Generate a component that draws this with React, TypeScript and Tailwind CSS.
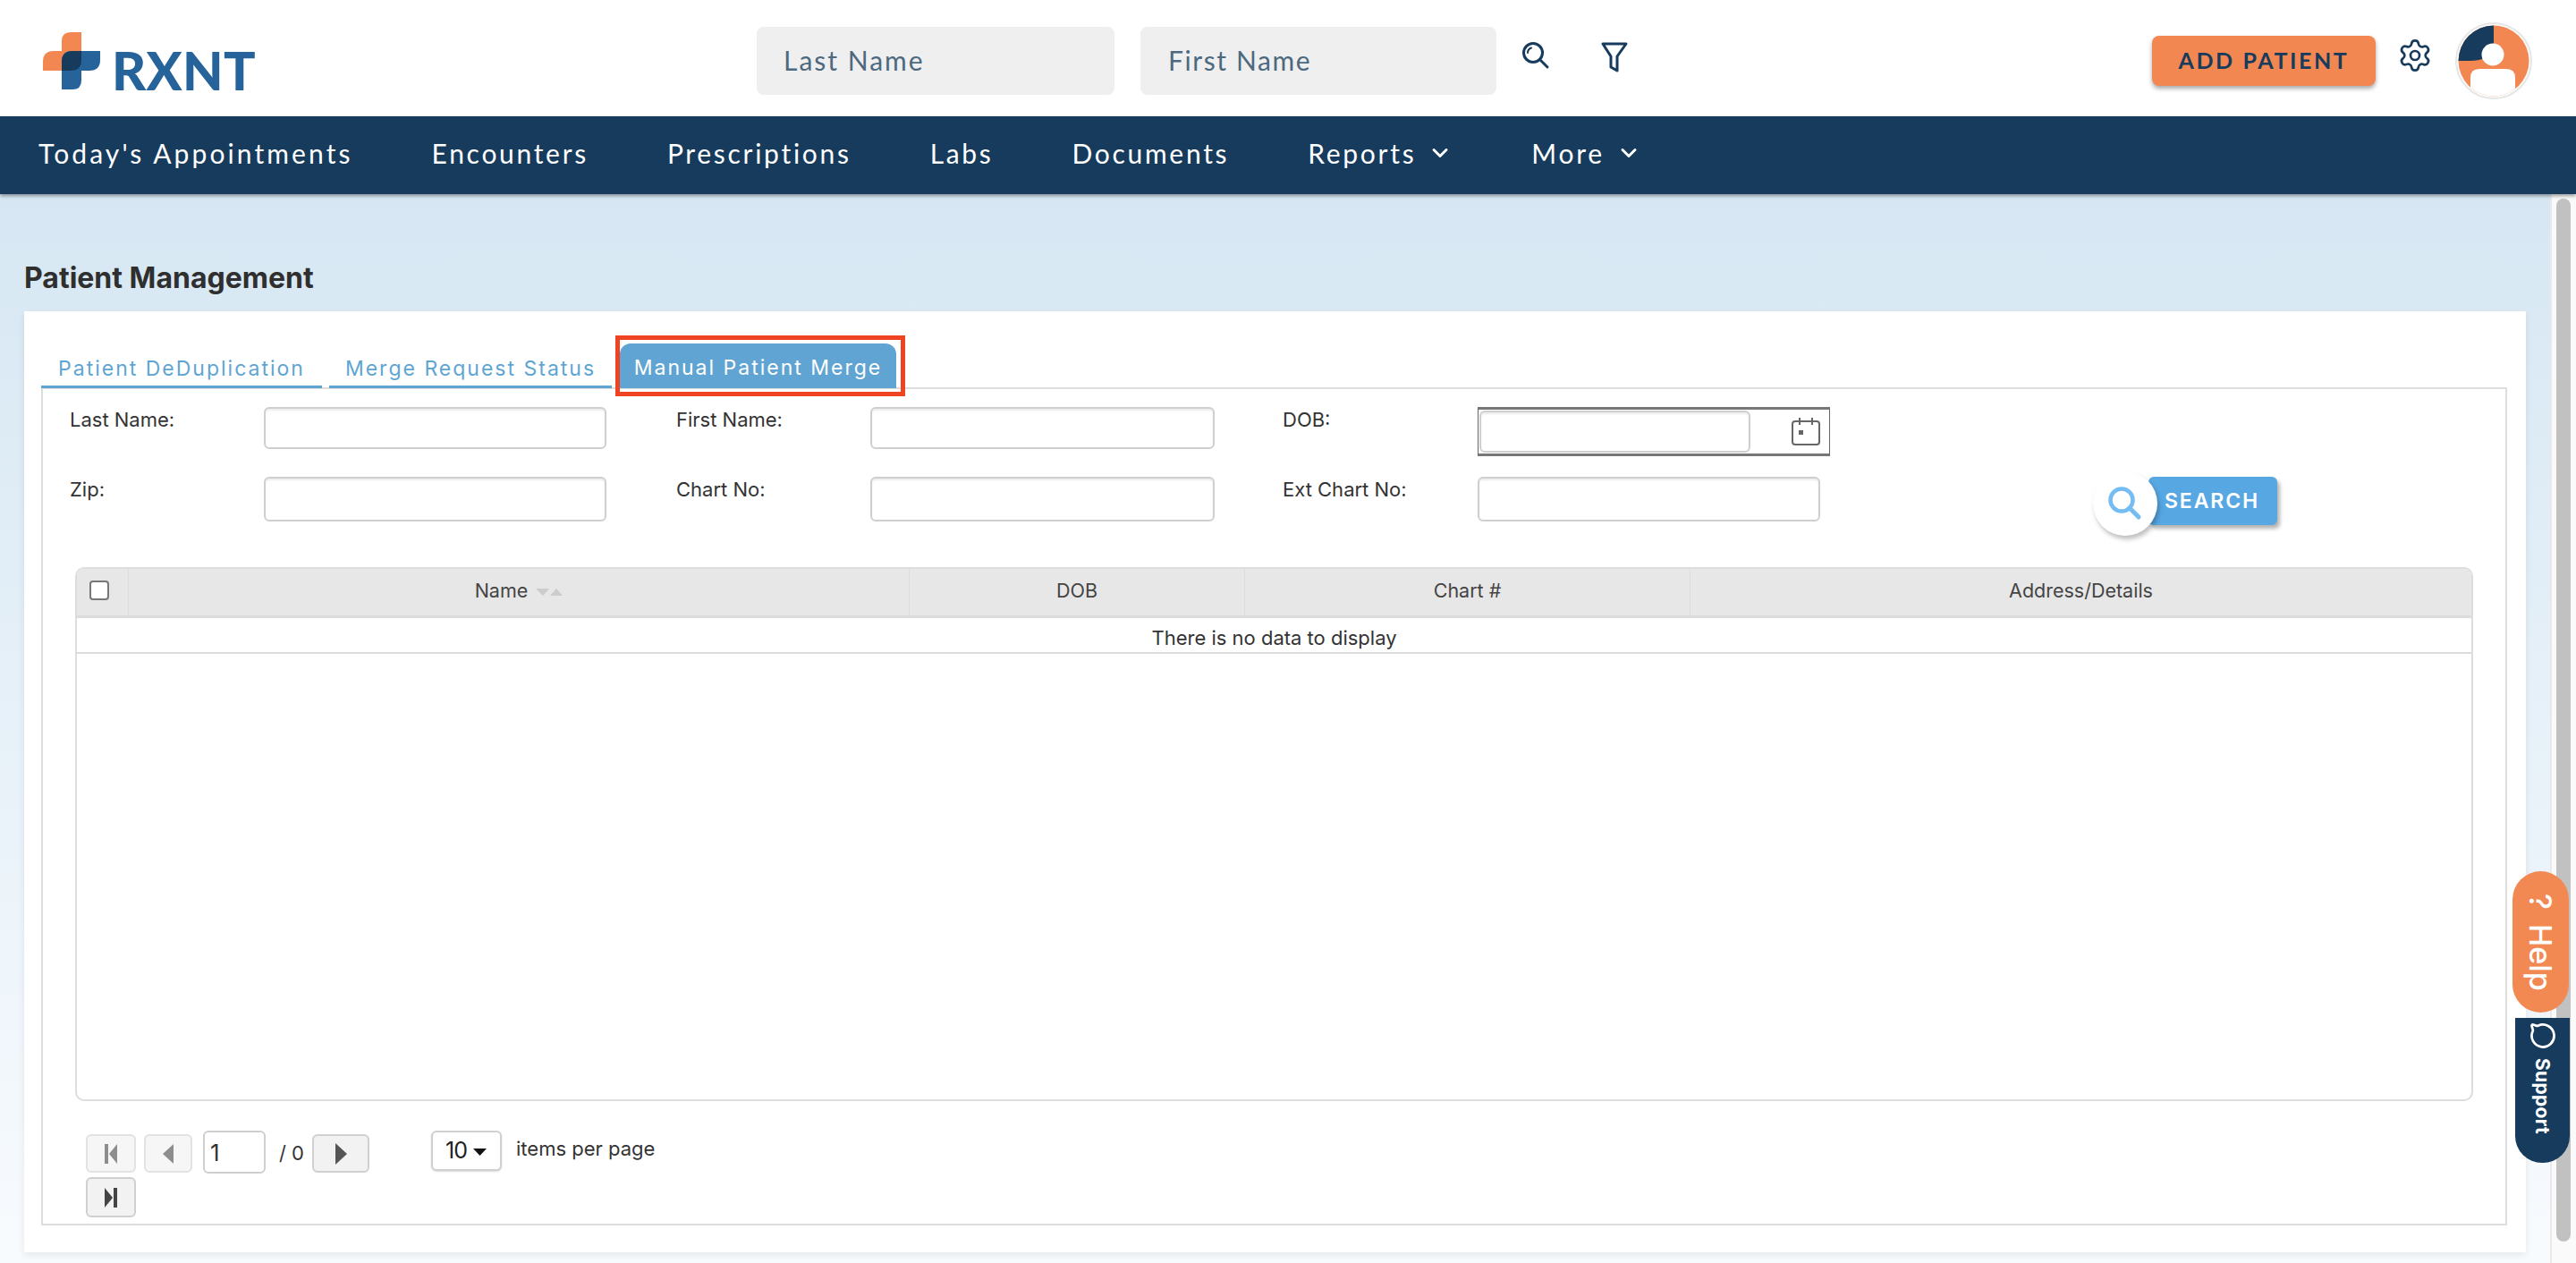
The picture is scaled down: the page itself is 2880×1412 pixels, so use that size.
import { ChevronDown, MessageCircle, Settings } from 'lucide-react';

const NAV_ITEMS = [
  { label: "Today's Appointments" },
  { label: 'Encounters' },
  { label: 'Prescriptions' },
  { label: 'Labs' },
  { label: 'Documents' },
  { label: 'Reports', caret: true },
  { label: 'More', caret: true },
];

function Logo() {
  return (
    <div className="flex items-end w-[235px] h-[64px] mt-[6px]">
      <svg width="64" height="64" viewBox="0 0 64 64" className="shrink-0">
        <path d="M31 0H43V31Q43 43 31 43H0V33Q0 21 12 21H21V10Q21 0 31 0Z" fill="#f38751" />
        <path d="M33 21H64V31Q64 43 52 43H43V54Q43 64 33 64H21V33Q21 21 33 21Z" fill="#26639a" />
        <path d="M33 21H43V31Q43 43 31 43H21V33Q21 21 33 21Z" fill="#163b5c" />
      </svg>
      <span className="ml-[13px] font-['Lato',sans-serif] font-black text-[59px] leading-[43px] h-[43px] text-[#26639a] tracking-[0.3px]">
        RXNT
      </span>
    </div>
  );
}

function Avatar() {
  return (
    <svg width="86" height="86" viewBox="0 0 86 86" className="shrink-0">
      <defs>
        <clipPath id="avatar-clip">
          <circle cx="43" cy="43" r="39.5" />
        </clipPath>
      </defs>
      <circle cx="43" cy="43" r="42" fill="#ffffff" stroke="#e6e6e6" strokeWidth="2" />
      <circle cx="43" cy="43" r="39.5" fill="#f38751" />
      <path d="M43 3.5A39.5 39.5 0 0 0 3.5 43H16Q36 43 43 30Z" fill="#163b5c" />
      <circle cx="42" cy="36" r="12.5" fill="#ffffff" />
      <path d="M17 86V62Q17 52 27 52H57Q67 52 67 62V86Z" fill="#ffffff" clipPath="url(#avatar-clip)" />
    </svg>
  );
}

function Header() {
  return (
    <header className="h-[130px] bg-white flex items-center pl-[48px] shrink-0">
      <Logo />
      <div className="ml-[563px] mt-[6px] w-[400px] h-[76px] rounded-[8px] bg-[#efefef] flex items-center pl-[30px] pb-[2px] text-[30px] tracking-[2px] text-[#4c6980] font-['Lato',sans-serif]">
        Last Name
      </div>
      <div className="ml-[29px] mt-[6px] w-[398px] h-[76px] rounded-[8px] bg-[#efefef] flex items-center pl-[31px] pb-[2px] text-[30px] tracking-[1.6px] text-[#4c6980] font-['Lato',sans-serif]">
        First Name
      </div>
      {/* search + filter */}
      <svg width="32" height="32" viewBox="0 0 32 32" className="ml-[28px] -mt-[4px] shrink-0" fill="none" stroke="#163b5c" strokeWidth="3" strokeLinecap="round">
        <circle cx="13" cy="12" r="10.5" />
        <path d="M21 20L29 28" />
        <path d="M7 12Q7 8 11 6.5" strokeWidth="2" />
      </svg>
      <svg width="30" height="34" viewBox="0 0 30 34" className="ml-[57px] -mt-[2px] shrink-0" fill="none" stroke="#163b5c" strokeWidth="3" strokeLinejoin="round">
        <path d="M2 2H28L18 16V32L11 28V16Z" />
      </svg>
      <button className="ml-[586px] mt-[6px] w-[250px] h-[56px] rounded-[8px] bg-[#f38751] shadow-[0_3px_5px_rgba(0,0,0,0.35)] text-[#163b5c] font-['Lato',sans-serif] font-bold text-[25px] tracking-[2.6px]">
        ADD PATIENT
      </button>
      <Settings size={40} strokeWidth={1.6} color="#163b5c" className="ml-[24px] -mt-[6px] shrink-0" />
      <div className="ml-[25px] mt-[6px]">
        <Avatar />
      </div>
    </header>
  );
}

function NavBar() {
  return (
    <nav className="relative z-10 h-[87px] bg-[#163b5c] shadow-[0_2px_4px_rgba(0,0,0,0.4)] flex items-center pl-[43px] pb-[5px] gap-[88px] shrink-0 font-['Lato',sans-serif] text-[30px] tracking-[2.7px] text-white">
      {NAV_ITEMS.map((item, i) => (
        <span key={item.label} className={i === 0 ? 'flex items-center tracking-[3.1px]' : 'flex items-center gap-[13px]'}>
          {item.label}
          {item.caret && <ChevronDown size={28} strokeWidth={2.5} />}
        </span>
      ))}
    </nav>
  );
}

function TextInput({ className = 'h-[47px]' }: { className?: string }) {
  return (
    <div className={`w-full rounded-[6px] border-2 border-[#cfcfcf] bg-white shadow-[inset_0_2px_2px_rgba(0,0,0,0.08)] ${className}`} />
  );
}

function Field({ label }: { label: string }) {
  return <label className="text-[22px] leading-[28px] text-[#333]">{label}</label>;
}

function SearchFilters() {
  return (
    <div className="ml-[30px] mt-[20px] grid grid-cols-[217px_383px_78px_217px_385px_76px_218px_383px_367px_144px] grid-rows-[78px_54px] font-['Inter',sans-serif]">
      <Field label="Last Name:" />
      <div><TextInput /></div>
      <div />
      <Field label="First Name:" />
      <div><TextInput /></div>
      <div />
      <Field label="DOB:" />
      <div className="w-[394px] h-[55px] border-x border-y-[3px] border-x-[#666] border-y-[#777] flex items-start pt-[1px] pl-[1px]">
        <TextInput className="!w-[303px] h-[47px] shrink-0" />
        <svg width="34" height="32" viewBox="0 0 34 32" className="ml-[45px] mt-[8px] shrink-0" fill="none" stroke="#666" strokeWidth="2">
          <rect x="2" y="4" width="30" height="26" rx="3" />
          <path d="M10 0V8M24 0V8" />
          <rect x="9" y="14" width="5" height="5" fill="#666" stroke="none" />
        </svg>
      </div>
      <div />
      <div />
      <Field label="Zip:" />
      <div><TextInput className="h-[50px]" /></div>
      <div />
      <Field label="Chart No:" />
      <div><TextInput className="h-[50px]" /></div>
      <div />
      <Field label="Ext Chart No:" />
      <div><TextInput className="h-[50px]" /></div>
      <div />
      <div>
        <div className="relative w-[144px] h-[54px] rounded-[6px] bg-[#57a7e3] shadow-[3px_4px_4px_rgba(0,0,0,0.3)] flex items-center pl-[18px] font-semibold text-[23px] tracking-[1.9px] text-white">
          SEARCH
          {/* round icon sits over the button's left edge */}
          <div className="absolute left-[-62px] top-[-6px] w-[72px] h-[72px] rounded-full bg-white shadow-[2px_4px_5px_rgba(0,0,0,0.25)] flex items-center justify-center">
            <svg width="38" height="38" viewBox="0 0 38 38" fill="none" stroke="#75bcf3" strokeWidth="4.5" strokeLinecap="round">
              <circle cx="15" cy="15" r="12.5" />
              <path d="M24 24L34 34" strokeWidth="5" />
            </svg>
          </div>
        </div>
      </div>
    </div>
  );
}

function SortCarets() {
  return (
    <svg width="30" height="8" viewBox="0 0 30 8" className="ml-[9px] mt-[2px]" fill="#cccccc">
      <path d="M0 0H15L8 8Z" />
      <path d="M16 8H30L23 0Z" />
    </svg>
  );
}

function ResultsTable() {
  const head = "flex items-center justify-center border-l border-[#dcdcdc] pb-[3px]";
  return (
    <div className="ml-[36px] mt-[47px] w-[2681px] h-[597px] rounded-[10px] border-2 border-[#dddddd] overflow-hidden font-['Inter',sans-serif] text-[21.5px] text-[#444]">
      <div className="grid grid-cols-[57px_873px_375px_498px_1fr] h-[55px] bg-[#e7e7e7] border-b-[3px] border-[#dcdcdc]">
        <div className="flex items-center justify-start pl-[14px] pb-[4px]">
          <div className="w-[22px] h-[22px] rounded-[4px] border-2 border-[#777] bg-white" />
        </div>
        <div className={head}>
          Name
          <SortCarets />
        </div>
        <div className={head}>DOB</div>
        <div className={head}>Chart #</div>
        <div className={head}>Address/Details</div>
      </div>
      <div className="h-[40px] border-b-2 border-[#dcdcdc] flex items-center justify-center pt-[6px] text-[22px] text-[#333]">
        There is no data to display
      </div>
    </div>
  );
}

function PagerButton({ className, children }: { className: string; children: React.ReactNode }) {
  return (
    <div className={`flex items-center justify-center rounded-[6px] border-2 ${className}`}>
      {children}
    </div>
  );
}

function Pager() {
  return (
    <div className="ml-[48px] mt-[33px] flex items-start font-['Inter',sans-serif]">
      <div className="w-[330px] flex flex-wrap items-start gap-y-[4px]">
        <PagerButton className="mt-[4px] w-[56px] h-[43px] border-[#e2e2e2] bg-[#f6f6f6]">
          <svg width="14" height="22" viewBox="0 0 14 22" fill="#8d8d8d">
            <rect x="0" y="0" width="4" height="22" />
            <path d="M14 0V22L5 11Z" />
          </svg>
        </PagerButton>
        <PagerButton className="ml-[9px] mt-[4px] w-[54px] h-[43px] border-[#e2e2e2] bg-[#f6f6f6]">
          <svg width="12" height="22" viewBox="0 0 12 22" fill="#8d8d8d">
            <path d="M12 0V22L0 11Z" />
          </svg>
        </PagerButton>
        <div className="ml-[12px] w-[70px] h-[48px] rounded-[6px] border-2 border-[#cfcfcf] bg-white flex items-center pl-[6px] text-[26px] text-[#333]">
          1
        </div>
        <span className="ml-[15px] w-[37px] mt-[9px] text-[22px] leading-[32px] text-[#333]">/ 0</span>
        <PagerButton className="mt-[4px] w-[64px] h-[43px] border-[#d0d0d0] bg-[#f2f2f2]">
          <svg width="13" height="24" viewBox="0 0 13 24" fill="#555555">
            <path d="M0 0V24L13 12Z" />
          </svg>
        </PagerButton>
        <PagerButton className="w-[56px] h-[45px] border-[#d0d0d0] bg-[#f2f2f2]">
          <svg width="14" height="22" viewBox="0 0 14 22" fill="#444444">
            <path d="M0 0V22L9 11Z" />
            <rect x="10" y="0" width="4" height="22" />
          </svg>
        </PagerButton>
      </div>
      <div className="ml-[56px] w-[79px] h-[45px] rounded-[6px] border-2 border-[#d0d0d0] bg-white shadow-[0_1px_2px_rgba(0,0,0,0.15)] flex items-center pl-[14px] text-[25px] tracking-[-1px] text-[#222]">
        10
        <svg width="15" height="8" viewBox="0 0 15 8" className="ml-[7px] mt-[2px]" fill="#111111">
          <path d="M0 0H15L7.5 8Z" />
        </svg>
      </div>
      <span className="ml-[16px] text-[22px] leading-[40px] text-[#333]">items per page</span>
    </div>
  );
}

function Tabs() {
  const tab = "flex items-center justify-center h-[40px] border-b-[3px] border-[#5fa5d3] text-[#5fa5d3]";
  return (
    <div className="relative z-10 h-[50px] flex items-end font-['Inter',sans-serif] text-[23px] tracking-[2px]">
      <div className={`${tab} w-[314px]`}>Patient DeDuplication</div>
      <div className={`${tab} ml-[8px] w-[316px]`}>Merge Request Status</div>
      <div className="relative ml-[9px] w-[309px] h-[50px] rounded-t-[12px] bg-[#5fa4d2] text-white flex items-center justify-center pt-[4px]">
        Manual Patient Merge
        {/* red annotation box */}
        <div className="absolute left-[-5px] right-[-10px] top-[-9px] bottom-[-9px] border-[5px] border-[#ee4423]" />
      </div>
    </div>
  );
}

function Card() {
  return (
    <section className="w-[2797px] h-[1052px] bg-white shadow-[0_3px_8px_rgba(0,0,0,0.08)] pl-[19px] pr-[21px] pt-[36px]">
      <Tabs />
      <div className="-mt-[1px] h-[937px] border-2 border-[#dddddd]">
        <SearchFilters />
        <ResultsTable />
        <Pager />
      </div>
    </section>
  );
}

function SideWidgets() {
  return (
    <>
      <div className="absolute left-[2809px] top-[974px] w-[63px] h-[158px] rounded-full bg-[#f28852] text-white flex items-center justify-center gap-[16px] [writing-mode:vertical-rl] font-['Inter',sans-serif] font-medium text-[34px] z-20">
        <span>?</span>
        <span>Help</span>
      </div>
      <div className="absolute left-[2812px] top-[1138px] w-[61px] h-[162px] rounded-b-[30px] bg-[#163b5c] text-white flex flex-col items-center pt-[5px] z-20">
        <MessageCircle size={30} strokeWidth={2.2} className="rotate-90" />
        <span className="mt-[10px] [writing-mode:vertical-rl] font-['Inter',sans-serif] font-bold text-[21px] tracking-[0.3px]">
          Support
        </span>
      </div>
    </>
  );
}

export default function App() {
  return (
    <div className="relative w-[2880px] h-[1412px] overflow-hidden flex flex-col bg-white">
      <Header />
      <NavBar />
      <div className="flex-1 flex min-h-0">
        <main className="flex-1 bg-gradient-to-b from-[#d6e7f3] to-[#f8fbfe] pl-[27px] pt-[74px]">
          <h1 className="h-[40px] leading-[40px] mb-[17px] font-['Inter',sans-serif] font-bold text-[32px] text-[#2f2f2f]">
            Patient Management
          </h1>
          <Card />
        </main>
        <div className="w-[29px] bg-[#fafafa] border-l-2 border-[#e9e9e9] pl-[5px] pt-[5px]">
          <div className="w-[16px] h-[1166px] rounded-full bg-[#c1c1c1]" />
        </div>
      </div>
      <SideWidgets />
    </div>
  );
}
